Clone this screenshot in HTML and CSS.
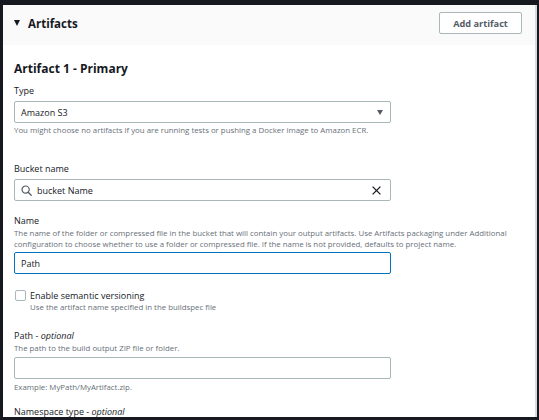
FILE: index.html
```html
<!DOCTYPE html>
<html>
<head>
<meta charset="utf-8">
<link rel="stylesheet" href="styles.css">
</head>
<body>
<div class="frame">
  <div class="panel">
    <div class="header">
      <div class="title"><span class="caret"></span>Artifacts</div>
      <button class="btn">Add artifact</button>
    </div>
    <div class="content">
      <h2 class="sub">Artifact 1 - Primary</h2>

      <div class="field f-type">
        <div class="label">Type</div>
        <div class="input select"><span>Amazon S3</span><span class="arrow"></span></div>
        <div class="hint">You might choose no artifacts if you are running tests or pushing a Docker image to Amazon ECR.</div>
      </div>

      <div class="field f-bucket">
        <div class="label">Bucket name</div>
        <div class="input search">
          <svg class="ico" width="11" height="11" viewBox="0 0 11 11"><circle cx="4.6" cy="4.6" r="3.6" fill="none" stroke="#545b64" stroke-width="1.2"/><path d="M7.2 7.2L10.2 10.2" stroke="#545b64" stroke-width="1.3" stroke-linecap="round"/></svg>
          <span class="val">bucket Name</span>
          <svg class="x" width="9" height="9" viewBox="0 0 9 9"><path d="M0.6 0.6L8.4 8.4M8.4 0.6L0.6 8.4" stroke="#16191f" stroke-width="1.3"/></svg>
        </div>
      </div>

      <div class="field f-name">
        <div class="label">Name</div>
        <div class="desc">The name of the folder or compressed file in the bucket that will contain your output artifacts. Use Artifacts packaging under Additional configuration to choose whether to use a folder or compressed file. If the name is not provided, defaults to project name.</div>
        <div class="input focus"><span>Path</span></div>
      </div>

      <div class="check">
        <span class="box"></span>
        <div>
          <div class="clabel">Enable semantic versioning</div>
          <div class="cdesc">Use the artifact name specified in the buildspec file</div>
        </div>
      </div>

      <div class="field f-path">
        <div class="label">Path - <i>optional</i></div>
        <div class="desc">The path to the build output ZIP file or folder.</div>
        <div class="input"></div>
        <div class="hint">Example: MyPath/MyArtifact.zip.</div>
      </div>

      <div class="field f-ns">
        <div class="label">Namespace type - <i>optional</i></div>
      </div>
    </div>
  </div>
</div>
</body>
</html>
```
FILE: styles.css
```css
html, body { margin: 0; padding: 0; }
body {
  background: #16191f;
  font-family: "Open Sans", "Noto Sans", sans-serif;
  color: #16191f;
  width: 539px;
  height: 420px;
  overflow: hidden;
}
.frame {
  padding: 5px 2px 0 3px;
  height: 412px;
}
.panel {
  background: #fff;
  height: 412px;
  overflow: hidden;
  border-right: 2px solid #d5dbdb;
  box-sizing: border-box;
}
.header {
  background: #fafafa;
  height: 36px;
  padding-bottom: 4px;
  display: flex;
  align-items: center;
  justify-content: space-between;
  padding-left: 11px;
  padding-right: 13px;
}
.title {
  font-weight: 700;
  font-size: 11.5px;
  display: flex;
  align-items: center;
}
.caret {
  width: 0; height: 0;
  border-left: 3.5px solid transparent;
  border-right: 3.5px solid transparent;
  border-top: 6px solid #16191f;
  margin-right: 8px;
}
.btn {
  font-family: inherit;
  font-size: 9.2px;
  font-weight: 700;
  color: #545b64;
  background: #fff;
  border: 1px solid #aab7b8;
  border-radius: 2px;
  width: 83px;
  height: 22px;
  padding: 0;
}
.content { padding: 0 11px; }
.sub {
  font-size: 12px;
  font-weight: 700;
  margin: 15px 0 0;
  line-height: 18px;
}
.field { margin-top: 6px; }
.label { font-size: 9px; line-height: 14px; }
.label i { font-style: italic; }
.input {
  box-sizing: border-box;
  width: 377px;
  height: 22px;
  border: 1px solid #aab7b8;
  border-radius: 2px;
  display: flex;
  align-items: center;
  padding: 0 6px;
  font-size: 9px;
  margin-top: 3px;
}
.select { justify-content: space-between; }
.arrow {
  width: 0; height: 0;
  border-left: 3.5px solid transparent;
  border-right: 3.5px solid transparent;
  border-top: 5px solid #545b64;
  margin-right: 1px;
}
.hint { font-size: 7.85px; color: #687078; line-height: 11px; margin-top: 2px; }
.desc { font-size: 7.85px; color: #687078; line-height: 11px; }
.f-bucket { margin-top: 26px; }
.search .val { margin-left: 5px; flex: 1; }
.search .x { margin-right: 3px; }
.f-name { margin-top: 13px; }
.f-name .input { margin-top: 2px; }
.focus { border-color: #0073bb; }
.check { display: flex; margin-top: 15px; margin-left: 1px; }
.box {
  width: 9px; height: 9px;
  border: 1px solid #aab7b8;
  border-radius: 2px;
  margin-top: 1px;
  margin-right: 4px;
  flex: none;
}
.clabel { font-size: 9px; line-height: 13px; }
.cdesc { font-size: 7.85px; color: #687078; line-height: 11px; }
.f-path { margin-top: 16px; }
.f-path .hint { margin-top: 3px; }
.f-ns { margin-top: 12px; }
```
